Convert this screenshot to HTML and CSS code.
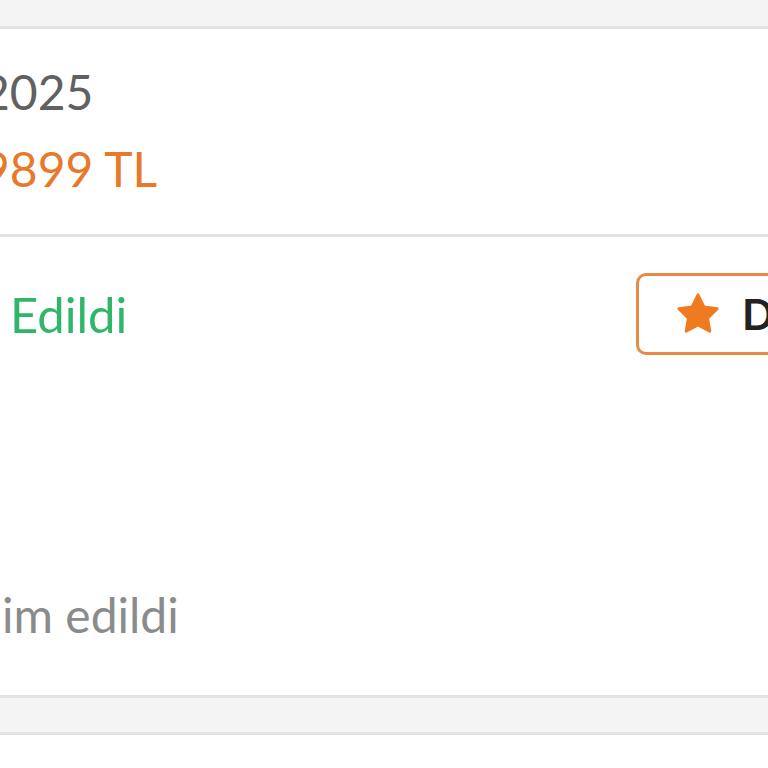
FILE: index.html
```html
<!DOCTYPE html>
<html lang="tr">
<head>
<meta charset="utf-8">
<title>Sipariş</title>
<link rel="stylesheet" href="styles.css">
</head>
<body>
<div class="screen">
  <div class="band band-top"></div>
  <section class="card summary">
    <div class="line date"><span class="lead lead-date"><span>Sipariş Tarihi: 12.01.</span></span><span>2025</span></div>
    <div class="line price"><span class="lead lead-price"><span>Toplam Tutar: 1</span></span><span>9899 TL</span></div>
  </section>
  <section class="card status-card">
    <div class="status-row">
      <div class="status">
        <span class="lead lead-status"><span>Sipariş Teslim&nbsp;</span></span><span>Edildi</span>
      </div>
      <div class="rate" role="button">
        <svg class="star" width="46" height="46" viewBox="0 0 24 24" aria-hidden="true"><path d="M12 2l3.09 6.26L22 9.27l-5 4.87 1.18 6.88L12 17.77l-6.18 3.25L7 14.14 2 9.27l6.91-1.01L12 2z"/></svg>
        <span class="rate-label">Değerlendir</span>
      </div>
    </div>
    <div class="line note"><span class="lead lead-note"><span>Ürün tesl</span></span><span>im edildi</span></div>
  </section>
  <div class="band band-gap"></div>
  <section class="card next"></section>
</div>
</body>
</html>
```

FILE: styles.css
```css
html, body {
  margin: 0;
  padding: 0;
  background: #ffffff;
  overflow: hidden;
}
body {
  font-family: Lato, "Noto Sans", "Liberation Sans", sans-serif;
}
.screen {
  margin-left: -120px;
  width: 1300px;
}
.band {
  background: #f4f4f4;
}
.band-top {
  height: 26px;
}
.band-gap {
  height: 34px;
  border-top: 3px solid #e3e3e3;
}
.card {
  background: #ffffff;
  border-top: 3px solid #e3e3e3;
}
.summary {
  box-sizing: border-box;
  height: 208px;
  padding-top: 24px;
}
.line {
  display: flex;
  font-size: 48px;
  line-height: 77px;
  white-space: nowrap;
}
.lead {
  display: flex;
  justify-content: flex-end;
  white-space: nowrap;
  flex: 0 0 auto;
}
.lead-date { width: 102px; }
.lead-price { width: 102px; }
.lead-status { width: 130px; }
.lead-note { width: 122px; }
.date { color: #616161; }
.price { color: #e8792b; }
.status-card {
  box-sizing: border-box;
  height: 461px;
  padding-top: 36px;
}
.status-row {
  display: flex;
  align-items: center;
  min-height: 82px;
}
.status {
  flex: 0 0 756px;
  display: flex;
  font-size: 49px;
  line-height: 80px;
  white-space: nowrap;
  color: #30b66a;
}
.rate {
  flex: 0 0 auto;
  min-height: 82px;
  box-sizing: border-box;
  display: flex;
  align-items: center;
  gap: 21px;
  padding: 15px 40px 15px 36px;
  border: 3px solid #e68a48;
  border-radius: 10px;
  background: #ffffff;
  font-size: 42px;
  line-height: 46px;
  font-weight: 700;
  color: #222222;
  white-space: nowrap;
}
.star {
  display: block;
  flex: 0 0 auto;
  fill: #f07a1f;
  stroke: #f07a1f;
  stroke-width: 1.5;
  stroke-linejoin: round;
}
.note {
  color: #8b8b8b;
  margin-top: 221px;
}
.next {
  height: 60px;
}
```
